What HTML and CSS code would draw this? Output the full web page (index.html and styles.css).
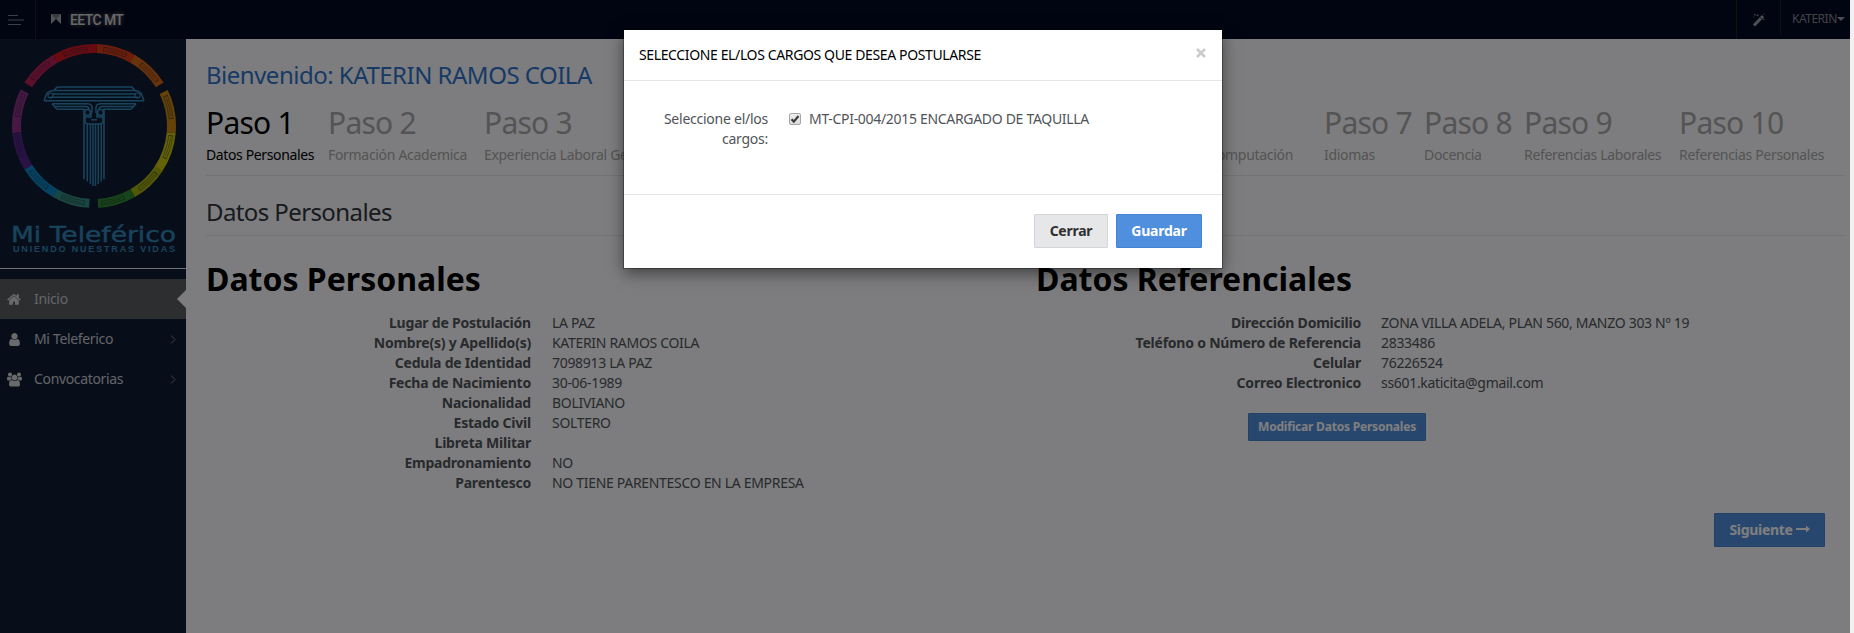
FILE: index.html
```html
<!DOCTYPE html>
<html lang="es">
<head>
<meta charset="utf-8">
<title>EETC MT</title>
<link rel="stylesheet" href="styles.css">
</head>
<body>
<div class="page">
  <header class="topbar">
    <div class="menu-toggle">
      <svg width="16" height="11" viewBox="0 0 16 11"><path d="M0 .5h10M0 5h16M0 9.500h13" stroke="#7b7f8a" stroke-width="1"/></svg>
    </div>
    <div class="brand">
      <svg width="10" height="10" viewBox="0 0 10 10"><path d="M0 0h10v10L5 5 0 10z" fill="#a4a6ab"/><path d="M0 0l5 5 5-5z" fill="#74777f"/></svg>
      <span>EETC MT</span>
    </div>
    <div class="wand">
      <svg width="14" height="14" viewBox="0 0 14 14"><path d="M2 12.500L11 3" stroke="#a0a3aa" stroke-width="3"/><path d="M8 4.300l1.800 1.800" stroke="#020a22" stroke-width=".8"/><path d="M3 1v1.500M2.200 1.700h1.600M5.600 1.300v2M4.600 2.300h2M11.500 5.500v1.600M10.700 6.300h1.600M12 .6v1M1.500 4h1" stroke="#8d9099" stroke-width=".8"/></svg>
    </div>
    <div class="user">KATERIN<i class="caret"></i></div>
  </header>
  <div class="columns">
    <aside class="sidebar">
      <svg class="logo" width="186" height="229" viewBox="0 39 186 229">
        <g fill="none" stroke-width="9" transform="rotate(-90 94 126)">
          <circle cx="94" cy="126" r="77.500" pathLength="360" stroke="#d83c16" stroke-dasharray="29 331" stroke-dashoffset="-2"/>
          <circle cx="94" cy="126" r="77.500" pathLength="360" stroke="#d06418" stroke-dasharray="28 332" stroke-dashoffset="-30"/>
          <circle cx="94" cy="126" r="77.500" pathLength="360" stroke="#c98410" stroke-dasharray="31 329" stroke-dashoffset="-64"/>
          <circle cx="94" cy="126" r="77.500" pathLength="360" stroke="#cbc30e" stroke-dasharray="29 331" stroke-dashoffset="-95"/>
          <circle cx="94" cy="126" r="77.500" pathLength="360" stroke="#a3b00c" stroke-dasharray="27 333" stroke-dashoffset="-123"/>
          <circle cx="94" cy="126" r="77.500" pathLength="360" stroke="#2e8a32" stroke-dasharray="27 333" stroke-dashoffset="-150"/>
          <circle cx="94" cy="126" r="77.500" pathLength="360" stroke="#338c80" stroke-dasharray="27 333" stroke-dashoffset="-183.500"/>
          <circle cx="94" cy="126" r="77.500" pathLength="360" stroke="#0d84c2" stroke-dasharray="28 332" stroke-dashoffset="-210"/>
          <circle cx="94" cy="126" r="77.500" pathLength="360" stroke="#54238c" stroke-dasharray="27 333" stroke-dashoffset="-238"/>
          <circle cx="94" cy="126" r="77.500" pathLength="360" stroke="#90308a" stroke-dasharray="31.500 328.500" stroke-dashoffset="-265"/>
          <circle cx="94" cy="126" r="77.500" pathLength="360" stroke="#b82058" stroke-dasharray="28 332" stroke-dashoffset="-302"/>
          <circle cx="94" cy="126" r="77.500" pathLength="360" stroke="#d21626" stroke-dasharray="32 328" stroke-dashoffset="-330"/>
        </g>
        <g fill="none" stroke="#1f2636" stroke-opacity=".6" stroke-width=".7" transform="rotate(-90 94 126)">
          <circle cx="94" cy="126" r="79.500" pathLength="360" stroke-dasharray="17 13" stroke-dashoffset="-7"/>
          <circle cx="94" cy="126" r="77.500" pathLength="360" stroke-dasharray="14 16" stroke-dashoffset="-9"/>
          <circle cx="94" cy="126" r="75.500" pathLength="360" stroke-dasharray="17 13" stroke-dashoffset="-7"/>
          <circle cx="94" cy="126" r="77.500" stroke-width="4.500" pathLength="360" stroke-dasharray=".7 16.300 .7 12.300" stroke-dashoffset="-7"/>
        </g>
        <g fill="none" stroke="#3387b8" stroke-width="1.600">
          <path d="M57 87h75M54 90.500h80M52 94h84M50 97.300h88M44 100.700h100M57 87l-3 3.500M132 87l3 3.500M54 90.500q-7 .5-8 5l-2 5M134 90.500q7 .5 8 5l2 5"/>
          <circle cx="50.500" cy="95.500" r="2.500" stroke-width="1.200"/><circle cx="137.500" cy="95.500" r="2.500" stroke-width="1.200"/>
          <path d="M52 103.800h35q5 0 5 4v5M136 103.800h-35q-5 0-5 4v5M54 106.500h32q3 0 3 3M134 106.500h-32q-3 0-3 3M57 109.200h27v70M131 109.200h-27v70M52 103.800l5 5.400M136 103.800l-5 5.400"/>
          <circle cx="87.500" cy="112.500" r="3"/><circle cx="100.500" cy="112.500" r="3"/>
          <path d="M85 116v5q0 3 4 3h10q4 0 4-3v-5M85 117h6v-4M103 117h-6v-4M91 119.700h6"/>
          <path d="M87.300 124v57.500M90.400 124v60M93 124v62M95.500 124v62M98.300 124v60M101.200 124v57.500" stroke-width="1.500"/>
        </g>
        <text class="logo-name" x="11" y="242" textLength="165" lengthAdjust="spacingAndGlyphs">Mi Teleférico</text>
        <text class="logo-motto" x="13" y="252" textLength="162">UNIENDO NUESTRAS VIDAS</text>
      </svg>
      <nav class="nav">
        <a class="nav-item active"><svg class="nav-icon" viewBox="0 0 1792 1792"><path d="M1408 992v480q0 26-19 45t-45 19h-384v-384h-256v384h-384q-26 0-45-19t-19-45v-480q0-1 .5-3t.5-3l575-474 575 474q1 2 1 6zm223-69l-62 74q-8 9-21 11h-3q-13 0-21-7l-692-577-692 577q-12 8-24 7-13-2-21-11l-62-74q-8-10-7-23.500t11-21.500l719-599q32-26 76-26t76 26l244 204v-195q0-14 9-23t23-9h192q14 0 23 9t9 23v408l219 182q10 8 11 21.500t-7 23.500z"/></svg><span>Inicio</span><i class="notch"></i></a>
        <a class="nav-item"><svg class="nav-icon" viewBox="0 0 1792 1792"><path d="M1536 1399q0 109-62.500 187t-150.500 78h-854q-88 0-150.500-78t-62.500-187q0-85 8.500-160.500t31.500-152 58.500-131 94-89 134.500-34.500q131 128 313 128t313-128q76 0 134.500 34.500t94 89 58.500 131 31.500 152 8.500 160.500zm-256-887q0 159-112.500 271.500t-271.500 112.500-271.500-112.500-112.500-271.500 112.500-271.500 271.500-112.500 271.500 112.500 112.500 271.500z"/></svg><span>Mi Teleferico</span><svg class="chevron" width="6" height="9" viewBox="0 0 6 9"><path d="M1 .5l4 4-4 4"/></svg></a>
        <a class="nav-item"><svg class="nav-icon" viewBox="-64 0 1920 1792"><path d="M529 896q-162 5-265 128h-134q-82 0-138-40.500t-56-118.500q0-353 124-353 6 0 43.500 21t97.500 42.500 119 21.500q67 0 133-23-5 37-5 66 0 139 81 256zm1071 637q0 120-73 189.500t-194 69.500h-874q-121 0-194-69.500t-73-189.500q0-53 3.500-103.500t14-109 26.500-108.500 43-97.500 62-81 85.500-53.500 111.500-20q10 0 43 21.500t73 48 107 48 135 21.500 135-21.500 107-48 73-48 43-21.500q61 0 111.500 20t85.500 53.500 62 81 43 97.500 26.500 108.500 14 109 3.500 103.500zm-1024-1277q0 106-75 181t-181 75-181-75-75-181 75-181 181-75 181 75 75 181zm704 384q0 159-112.500 271.500t-271.500 112.500-271.500-112.500-112.500-271.500 112.500-271.500 271.500-112.500 271.500 112.500 112.500 271.500zm576 225q0 78-56 118.500t-138 40.500h-134q-103-123-265-128 81-117 81-256 0-29-5-66 66 23 133 23 59 0 119-21.500t97.500-42.500 43.500-21q124 0 124 353zm-128-609q0 106-75 181t-181 75-181-75-75-181 75-181 181-75 181 75 75 181z"/></svg><span>Convocatorias</span><svg class="chevron" width="6" height="9" viewBox="0 0 6 9"><path d="M1 .5l4 4-4 4"/></svg></a>
      </nav>
    </aside>
    <main class="content">
      <h3 class="welcome">Bienvenido: KATERIN RAMOS COILA</h3>
      <div class="steps">
        <div class="step current"><b>Paso 1</b><span>Datos Personales</span></div>
        <div class="step s2"><b>Paso 2</b><span>Formación Academica</span></div>
        <div class="step s3"><b>Paso 3</b><span>Experiencia Laboral General</span></div>
        <div class="step s6"><b>Paso 6</b><span>Computación</span></div>
        <div class="step s7"><b>Paso 7</b><span>Idiomas</span></div>
        <div class="step s8"><b>Paso 8</b><span>Docencia</span></div>
        <div class="step s9"><b>Paso 9</b><span>Referencias Laborales</span></div>
        <div class="step"><b>Paso 10</b><span>Referencias Personales</span></div>
      </div>
      <h3 class="section-title">Datos Personales</h3>
      <div class="panels">
        <section class="panel personal">
          <h2>Datos Personales</h2>
          <dl>
            <dt>Lugar de Postulación</dt><dd>LA PAZ</dd>
            <dt>Nombre(s) y Apellido(s)</dt><dd>KATERIN RAMOS COILA</dd>
            <dt>Cedula de Identidad</dt><dd>7098913 LA PAZ</dd>
            <dt>Fecha de Nacimiento</dt><dd>30-06-1989</dd>
            <dt>Nacionalidad</dt><dd>BOLIVIANO</dd>
            <dt>Estado Civil</dt><dd>SOLTERO</dd>
            <dt>Libreta Militar</dt><dd></dd>
            <dt>Empadronamiento</dt><dd>NO</dd>
            <dt>Parentesco</dt><dd>NO TIENE PARENTESCO EN LA EMPRESA</dd>
          </dl>
        </section>
        <section class="panel reference">
          <h2>Datos Referenciales</h2>
          <dl>
            <dt>Dirección Domicilio</dt><dd>ZONA VILLA ADELA, PLAN 560, MANZO 303 Nº 19</dd>
            <dt>Teléfono o Número de Referencia</dt><dd>2833486</dd>
            <dt>Celular</dt><dd>76226524</dd>
            <dt>Correo Electronico</dt><dd>ss601.katicita@gmail.com</dd>
          </dl>
          <button class="btn primary small">Modificar Datos Personales</button>
        </section>
      </div>
      <div class="pager">
        <button class="btn primary next">Siguiente <svg width="14" height="8" viewBox="0 0 14 8"><path d="M0 3h10V.5L14 4l-4 3.500V5H0z" fill="#fff"/></svg></button>
      </div>
    </main>
  </div>
  <div class="backdrop"></div>
  <div class="modal">
    <div class="modal-header"><h4>SELECCIONE EL/LOS CARGOS QUE DESEA POSTULARSE</h4><svg class="close" width="10" height="10" viewBox="0 0 10 10"><path d="M1 1l8 8M9 1L1 9" stroke="#ccc" stroke-width="2.600"/></svg></div>
    <div class="modal-body">
      <label class="field">Seleccione el/los cargos:</label>
      <div class="option"><svg width="12" height="12" viewBox="0 0 12 12"><defs><linearGradient id="g" x2="0" y2="1"><stop stop-color="#eee"/><stop offset="1" stop-color="#dcdcdc"/></linearGradient></defs><rect x=".5" y=".5" width="11" height="11" rx="1.500" fill="url(#g)" stroke="#a6a6a6"/><path d="M2.500 6.200l2.300 2.400L9.500 3" fill="none" stroke="#3c3c3c" stroke-width="2.200"/></svg><span>MT-CPI-004/2015 ENCARGADO DE TAQUILLA</span></div>
    </div>
    <div class="modal-footer"><button class="btn default">Cerrar</button><button class="btn primary save">Guardar</button></div>
  </div>
</div>
</body>
</html>
```
FILE: styles.css
```css
* { box-sizing: border-box; }
body { margin: 0; background: #f2f1f0; font-family: "Noto Sans", "Open Sans", sans-serif; font-size: 14px; line-height: 20px; letter-spacing: -0.31px; color: #505458; }
h2, h3, h4, dl, dd { margin: 0; font-weight: 400; }
.page { position: relative; width: 1850px; height: 633px; overflow: hidden; background: #fafbfe; white-space: nowrap; }
.topbar { display: flex; height: 39px; background: #020a22; }
.menu-toggle { width: 36px; padding: 15px 0 0 8px; border-right: 1px solid #1b2030; line-height: 0; }
.brand { display: flex; flex: 1; align-items: center; gap: 9px; padding: 0 0 1px 15px; color: #d0d0d4; font: 500 14px Roboto, sans-serif; letter-spacing: -0.6px; text-shadow: 0 0 4px #777; }
.brand span { padding-top: 1px; }
.wand { width: 44px; padding: 12px 0 0 15px; border-left: 1px solid #222322; }
.user { display: flex; align-items: center; width: 70px; height: 35px; padding: 3px 0 0 11px; border-left: 1px solid #222322; color: #84868d; font-size: 12px; letter-spacing: -0.5px; }
.caret { border: 4px solid transparent; border-top-color: #9b9da3; border-bottom: 0; }
.columns { display: flex; height: 594px; }
.sidebar { width: 186px; background: #0f1c34; }
.logo { display: block; }
.logo-name { fill: #3387b8; stroke: #3387b8; stroke-width: .4px; font: 20.5px "DejaVu Sans", sans-serif; letter-spacing: 0; }
.logo-motto { fill: #3387b8; font: bold 9px "Liberation Sans", sans-serif; letter-spacing: 0; }
.nav { border-top: 1px solid #e0e2e6; padding-top: 10px; }
.nav-item { position: relative; display: flex; align-items: center; height: 40px; padding: 0 10px 0 7px; color: #c8cacf; letter-spacing: -0.34px; }
.nav-item span { flex: 1; padding-left: 12px; }
.nav-icon { width: 15px; height: 15px; fill: #d2d4d8; }
.active { background: #585c60; }
.notch { position: absolute; right: 0; top: 11px; border: 9px solid transparent; border-right-color: #fafbfe; border-left: 0; }
.chevron path { fill: none; stroke: #7b8190; stroke-width: 1; }
.content { flex: 1; padding: 20px 5px 0 20px; }
.welcome { height: 32px; font-size: 24px; line-height: 32px; letter-spacing: -0.5px; color: #2f73cb; }
.steps { display: flex; height: 85px; padding-top: 12px; border-bottom: 1px solid #e7e7e9; color: #a8a8a8; }
.step { display: flex; flex-direction: column; flex: none; }
.step b { height: 40px; font-size: 30px; font-weight: 400; line-height: 40px; letter-spacing: -0.75px; }
.step span { line-height: 24px; }
.current { width: 122px; color: #000; }
.current span { letter-spacing: -0.37px; }
.s2 { width: 156px; }
.s3 { width: 620px; }
.s6 { width: 220px; padding-right: 31px; }
.s6 span { text-align: right; }
.s7 { width: 100px; }
.s8 { width: 100px; }
.s9 { width: 155px; }
.section-title { height: 60px; padding-top: 20px; border-bottom: 1px solid #e7e7e9; color: #30353b; font-size: 24px; line-height: 32px; letter-spacing: -0.6px; }
.panels { display: flex; padding-top: 21px; }
.panel { height: 256px; }
.personal { width: 830px; }
.panel h2 { height: 56px; color: #000; font-size: 32px; font-weight: 700; line-height: 44px; letter-spacing: 0; }
.panel dl { display: grid; grid-template-columns: 325px auto; column-gap: 21px; grid-auto-rows: 20px; }
.reference dl { column-gap: 20px; }
.panel dt { text-align: right; font-weight: 700; letter-spacing: -0.22px; }
.btn { display: inline-flex; align-items: center; justify-content: center; height: 34px; padding: 0 0 2px; border: 1px solid #4284d2; border-radius: 1px; font: bold 14px "Noto Sans", sans-serif; letter-spacing: -0.25px; }
.primary { background: #4f8fde; color: #fff; }
.default { width: 74px; background: #e6e7e9; border-color: #d3d5d8; color: #303030; }
.save { width: 86px; }
.small { width: 178px; height: 28px; margin: 20px 0 0 212px; font-size: 12px; letter-spacing: -0.2px; }
.pager { display: flex; justify-content: flex-end; padding-right: 20px; }
.next { width: 111px; gap: 3px; letter-spacing: -0.3px; }
.backdrop { position: absolute; inset: 0; background: rgba(0, 0, 0, .5); }
.modal { position: absolute; left: 624px; top: 30px; width: 598px; height: 238px; background: #fff; box-shadow: 0 0 0 1px rgba(0, 0, 0, .3), 0 5px 15px rgba(0, 0, 0, .5); }
.modal-header { display: flex; justify-content: space-between; height: 51px; padding: 15px 16px 0 15px; border-bottom: 1px solid #e5e5e5; }
.modal-header h4 { color: #000; font-size: 14px; line-height: 20px; letter-spacing: -0.37px; }
.close { margin-top: 3px; }
.modal-body { display: flex; height: 113px; padding: 28px 0 0 15px; }
.field { width: 129px; white-space: normal; text-align: right; letter-spacing: -0.25px; }
.option { display: flex; gap: 8px; padding-left: 21px; }
.option svg { margin-top: 4px; }
.modal-footer { display: flex; justify-content: flex-end; gap: 8px; height: 74px; padding: 19px 20px 0; border-top: 1px solid #e5e5e5; }
```
